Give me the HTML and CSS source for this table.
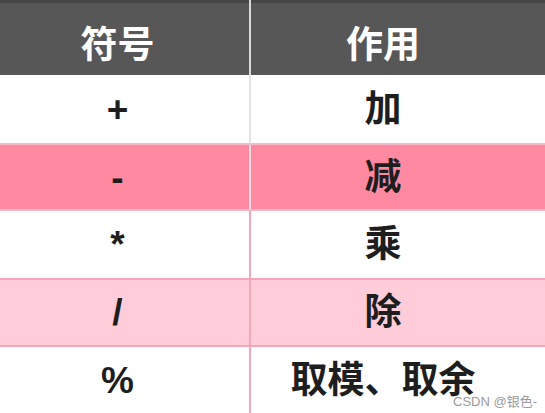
FILE: index.html
```html
<!DOCTYPE html>
<html lang="zh-CN">
<head>
<meta charset="utf-8">
<title>运算符</title>
<link rel="stylesheet" href="styles.css">
</head>
<body>
<div class="table">
  <div class="row head">
    <div class="cell left">符号</div>
    <div class="cell right">作用</div>
  </div>
  <div class="row r1">
    <div class="cell left">+</div>
    <div class="cell right">加</div>
  </div>
  <div class="row r2">
    <div class="cell left">-</div>
    <div class="cell right">减</div>
  </div>
  <div class="row r3">
    <div class="cell left">*</div>
    <div class="cell right">乘</div>
  </div>
  <div class="row r4">
    <div class="cell left">/</div>
    <div class="cell right">除</div>
  </div>
  <div class="row r5">
    <div class="cell left">%</div>
    <div class="cell right">取模、取余</div>
  </div>
  <div class="watermark">CSDN @银色-</div>
</div>
</body>
</html>
```

FILE: styles.css
```css
html, body {
  margin: 0;
  padding: 0;
  background: #ffffff;
}

body {
  width: 545px;
  height: 413px;
  overflow: hidden;
  font-family: "Liberation Sans", "Noto Sans CJK SC", sans-serif;
}

.table {
  position: relative;
  display: flex;
  flex-direction: column;
  width: 545px;
}

.row {
  display: flex;
  box-sizing: border-box;
  color: #1e1e1e;
  font-weight: 700;
  font-size: 37px;
}

.cell {
  display: flex;
  align-items: center;
  justify-content: center;
  box-sizing: border-box;
  line-height: 1;
}

.left {
  width: 251px;
  padding-right: 14px;
  border-right: 2px solid #f3a7b9;
}

.right {
  flex: 1;
  padding-right: 30px;
}

.head {
  height: 75px;
  background: linear-gradient(#464646 0, #464646 3px, #575757 3px);
  color: #ffffff;
}

.head .cell {
  padding-top: 16px;
}

.head .left {
  border-right-color: #d9d9d9;
}

.r1 {
  height: 68px;
}

.r1 .left {
  border-right-color: #e3e3e3;
}

.r2 {
  height: 68px;
  background: #ff89a1;
  border-top: 2px solid #f5bac7;
  border-bottom: 2px solid #f5bac7;
}

.r2 .left {
  border-right-color: #fbdbe2;
}

.r3 {
  height: 67px;
}

.r4 {
  height: 69px;
  background: #ffcdd9;
  border-top: 2px solid #f6a5b9;
  border-bottom: 2px solid #f6a5b9;
}

.r5 {
  height: 66px;
}

.watermark {
  position: absolute;
  left: 453px;
  top: 391px;
  font-family: "Liberation Sans", "Noto Sans CJK SC", sans-serif;
  font-size: 13px;
  font-weight: 400;
  color: #9a9a9a;
  text-shadow: 0 0 2px #ffffff, 0 0 2px #ffffff;
}
```
